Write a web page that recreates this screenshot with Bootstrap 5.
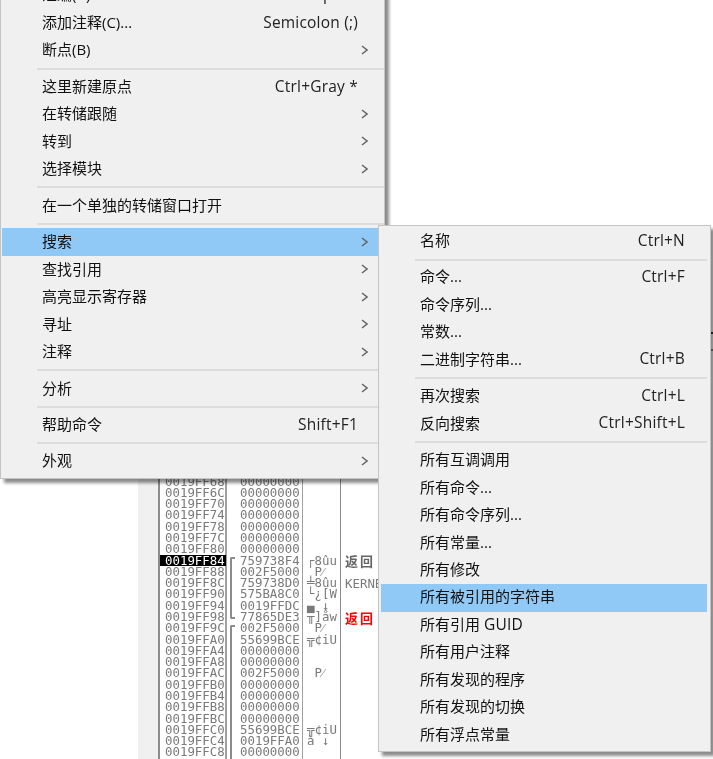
<!DOCTYPE html>
<html lang="zh">
<head>
<meta charset="utf-8">
<title>OllyDbg 右键菜单</title>
<link href="https://cdn.jsdelivr.net/npm/bootstrap@5.3.0/dist/css/bootstrap.min.css" rel="stylesheet">
<style>
html,body{margin:0;height:759px;overflow:hidden;background:#fff}
.stage{position:relative;width:713px;height:759px;overflow:hidden;filter:blur(.35px)}
.dump{margin-left:138px;padding-top:475.6px;height:759px;font:12.4px/11.28px "DejaVu Sans Mono",monospace;color:#7a7a7a;white-space:pre}
.side-gutter{width:20px;background:#f0f0f0}
.addr-col{width:69px;border-left:2px solid #8c8c8c;border-right:2px solid #a0a0a0;padding-left:5px}
.val-col{width:76px;padding-left:13px;position:relative;border-right:1px solid #a0a0a0}
.ascii-col{width:38px;padding-left:4px;border-right:1px solid #8c8c8c}
.note-col{flex:1;padding-left:4px}
.sel-row{display:block;background:#000;color:#fff;margin-left:-5px;padding-left:5px;margin-right:-1px}
.note-red{color:#f00}
.cjk-note{font-family:"Noto Sans CJK SC",sans-serif;font-size:13px;font-weight:700;letter-spacing:2px;color:#666}
.cjk-note.note-red{color:#f00}
.bracket{position:absolute;left:3px;width:5px;border:2px solid #8c8c8c;border-right:0;border-bottom-left-radius:2px;border-top-left-radius:2px}
.bracket-a{top:81px;height:62px}
.bracket-b{top:149px;height:200px}
.ctx-menu{--bs-dropdown-bg:#f0f0f0;--bs-dropdown-padding-y:0;--bs-dropdown-border-radius:0;--bs-dropdown-border-color:#c4c4c4;--bs-dropdown-min-width:0;--bs-dropdown-font-size:15px;--bs-dropdown-box-shadow:none;border-width:1px;box-shadow:4px 4px 3px rgba(0,0,0,.45);font-family:"Open Sans","Noto Sans CJK SC",sans-serif}
.menu-main{left:0;top:-21.3px;width:385px;padding-top:2px;padding-bottom:2.5px;z-index:1}
.menu-sub{left:378px;top:225px;width:333px;padding-top:1.6px;padding-bottom:2.4px;z-index:2}
.ctx-item{display:flex;justify-content:space-between;align-items:center;height:27.47px;padding:0 16px 1px 40px;margin:0 0 0 1px;width:auto;font-size:15px;line-height:1;color:#111;background:transparent;white-space:nowrap}
.menu-sub .ctx-item{padding:0 22px 2px 39px;margin:0 3px 0 2px}
.ctx-key{margin-right:10px;color:#222;font-size:15.5px;letter-spacing:.2px}
.menu-sub .ctx-key{margin-right:0}
.ctx-item.is-hot{background:#90c8f6;color:#111}
.ctx-sep{margin:3.5px 0 3.5px 36px;border-top:2px solid #dcdcdc;opacity:1}
.menu-sub .ctx-sep{margin-right:3px}
.chev{width:7px;height:10px;fill:none;stroke:#666;stroke-width:1.5}
.latin-run{font-size:15.5px;letter-spacing:.2px}
.edge-mark{position:absolute;left:711px;top:332px;width:2px;height:19px;border-top:2px solid #333;border-bottom:2px solid #888}
</style>
</head>
<body>
<svg width="0" height="0" class="d-block position-absolute"><symbol id="chev" viewBox="0 0 7 10"><path d="M1 1l5 4-5 4"/></symbol></svg>
<div class="stage">
  <div class="dump d-flex">
    <div class="side-gutter"></div>
    <div class="addr-col">0019FF68
0019FF6C
0019FF70
0019FF74
0019FF78
0019FF7C
0019FF80
<span class="sel-row">0019FF84</span>0019FF88
0019FF8C
0019FF90
0019FF94
0019FF98
0019FF9C
0019FFA0
0019FFA4
0019FFA8
0019FFAC
0019FFB0
0019FFB4
0019FFB8
0019FFBC
0019FFC0
0019FFC4
0019FFC8
0019FFCC</div>
    <div class="val-col"><span class="bracket bracket-a"></span><span class="bracket bracket-b"></span>00000000
00000000
00000000
00000000
00000000
00000000
00000000
759738F4
002F5000
759738D0
575BA8C0
0019FFDC
77865DE3
002F5000
55699BCE
00000000
00000000
002F5000
00000000
00000000
00000000
00000000
55699BCE
0019FFA0
00000000
0019FFD4</div>
    <div class="ascii-col">






┌8ûu
 P⁄
╧8ûu
└¿[W
▄ ↓
╥]åw
 P⁄
╦¢iU


 P⁄




╦¢iU
à ↓

</div>
    <div class="note-col">






<span class="cjk-note">返回</span>

KERNEL32


<span class="cjk-note note-red">返回</span>













              USER32</div>
  </div>

  <div class="dropdown-menu show ctx-menu menu-main">
    <div class="dropdown-item ctx-item"><span>汇编(A)...</span><span class="ctx-key">Space</span></div>
    <div class="dropdown-item ctx-item"><span>添加注释(C)...</span><span class="ctx-key">Semicolon (;)</span></div>
    <div class="dropdown-item ctx-item"><span>断点(B)</span><svg class="chev"><use href="#chev"/></svg></div>
    <hr class="dropdown-divider ctx-sep">
    <div class="dropdown-item ctx-item"><span>这里新建原点</span><span class="ctx-key">Ctrl+Gray *</span></div>
    <div class="dropdown-item ctx-item"><span>在转储跟随</span><svg class="chev"><use href="#chev"/></svg></div>
    <div class="dropdown-item ctx-item"><span>转到</span><svg class="chev"><use href="#chev"/></svg></div>
    <div class="dropdown-item ctx-item"><span>选择模块</span><svg class="chev"><use href="#chev"/></svg></div>
    <hr class="dropdown-divider ctx-sep">
    <div class="dropdown-item ctx-item"><span>在一个单独的转储窗口打开</span></div>
    <hr class="dropdown-divider ctx-sep">
    <div class="dropdown-item ctx-item is-hot"><span>搜索</span><svg class="chev"><use href="#chev"/></svg></div>
    <div class="dropdown-item ctx-item"><span>查找引用</span><svg class="chev"><use href="#chev"/></svg></div>
    <div class="dropdown-item ctx-item"><span>高亮显示寄存器</span><svg class="chev"><use href="#chev"/></svg></div>
    <div class="dropdown-item ctx-item"><span>寻址</span><svg class="chev"><use href="#chev"/></svg></div>
    <div class="dropdown-item ctx-item"><span>注释</span><svg class="chev"><use href="#chev"/></svg></div>
    <hr class="dropdown-divider ctx-sep">
    <div class="dropdown-item ctx-item"><span>分析</span><svg class="chev"><use href="#chev"/></svg></div>
    <hr class="dropdown-divider ctx-sep">
    <div class="dropdown-item ctx-item"><span>帮助命令</span><span class="ctx-key">Shift+F1</span></div>
    <hr class="dropdown-divider ctx-sep">
    <div class="dropdown-item ctx-item"><span>外观</span><svg class="chev"><use href="#chev"/></svg></div>
  </div>

  <div class="dropdown-menu show ctx-menu menu-sub">
    <div class="dropdown-item ctx-item"><span>名称</span><span class="ctx-key">Ctrl+N</span></div>
    <hr class="dropdown-divider ctx-sep">
    <div class="dropdown-item ctx-item"><span>命令...</span><span class="ctx-key">Ctrl+F</span></div>
    <div class="dropdown-item ctx-item"><span>命令序列...</span></div>
    <div class="dropdown-item ctx-item"><span>常数...</span></div>
    <div class="dropdown-item ctx-item"><span>二进制字符串...</span><span class="ctx-key">Ctrl+B</span></div>
    <hr class="dropdown-divider ctx-sep">
    <div class="dropdown-item ctx-item"><span>再次搜索</span><span class="ctx-key">Ctrl+L</span></div>
    <div class="dropdown-item ctx-item"><span>反向搜索</span><span class="ctx-key">Ctrl+Shift+L</span></div>
    <hr class="dropdown-divider ctx-sep">
    <div class="dropdown-item ctx-item"><span>所有互调调用</span></div>
    <div class="dropdown-item ctx-item"><span>所有命令...</span></div>
    <div class="dropdown-item ctx-item"><span>所有命令序列...</span></div>
    <div class="dropdown-item ctx-item"><span>所有常量...</span></div>
    <div class="dropdown-item ctx-item"><span>所有修改</span></div>
    <div class="dropdown-item ctx-item is-hot"><span>所有被引用的字符串</span></div>
    <div class="dropdown-item ctx-item"><span>所有引用 <span class="latin-run">GUID</span></span></div>
    <div class="dropdown-item ctx-item"><span>所有用户注释</span></div>
    <div class="dropdown-item ctx-item"><span>所有发现的程序</span></div>
    <div class="dropdown-item ctx-item"><span>所有发现的切换</span></div>
    <div class="dropdown-item ctx-item"><span>所有浮点常量</span></div>
  </div>
  <div class="edge-mark"></div>
</div>
<script src="https://cdn.jsdelivr.net/npm/bootstrap@5.3.0/dist/js/bootstrap.bundle.min.js"></script>
</body>
</html>
